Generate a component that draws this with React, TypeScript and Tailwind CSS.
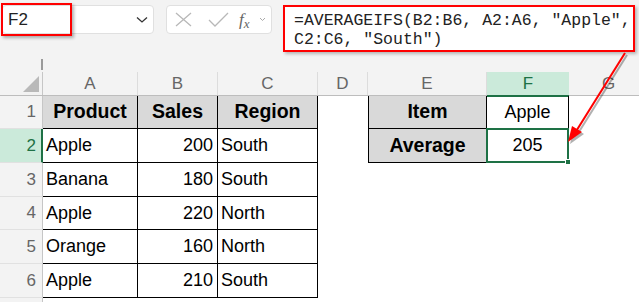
import React from "react";

const cols = [95, 80, 100, 50, 119, 82, 80];
const letters = ["A", "B", "C", "D", "E", "F", "G"];
const heights = [33, 34, 34, 33, 34, 34, 30];

type Cell = { t?: string; kind?: "hdr" | "l" | "r" | "c" | "sel"; box?: boolean; lb?: boolean };

const rows: Cell[][] = [
  [
    { t: "Product", kind: "hdr", box: true },
    { t: "Sales", kind: "hdr", box: true },
    { t: "Region", kind: "hdr", box: true },
    {},
    { t: "Item", kind: "hdr", box: true, lb: true },
    { t: "Apple", kind: "c", box: true },
    {},
  ],
  [
    { t: "Apple", kind: "l", box: true },
    { t: "200", kind: "r", box: true },
    { t: "South", kind: "l", box: true },
    {},
    { t: "Average", kind: "hdr", box: true, lb: true },
    { t: "205", kind: "sel", box: true },
    {},
  ],
  [
    { t: "Banana", kind: "l", box: true },
    { t: "180", kind: "r", box: true },
    { t: "South", kind: "l", box: true },
    {}, {}, {}, {},
  ],
  [
    { t: "Apple", kind: "l", box: true },
    { t: "220", kind: "r", box: true },
    { t: "North", kind: "l", box: true },
    {}, {}, {}, {},
  ],
  [
    { t: "Orange", kind: "l", box: true },
    { t: "160", kind: "r", box: true },
    { t: "North", kind: "l", box: true },
    {}, {}, {}, {},
  ],
  [
    { t: "Apple", kind: "l", box: true },
    { t: "210", kind: "r", box: true },
    { t: "South", kind: "l", box: true },
    {}, {}, {}, {},
  ],
  [{}, {}, {}, {}, {}, {}, {}],
];

function DataCell({ c, w }: { c: Cell; w: number }) {
  let cls = "h-full shrink-0 flex items-center text-[18px] text-black ";
  if (c.box) cls += "border-r border-b border-black ";
  if (c.lb) cls += "border-l ";
  if (c.kind === "hdr") cls += "bg-[#d9d9d9] justify-center font-bold text-[19.5px] ";
  if (c.kind === "l") cls += "justify-start pl-[3px] ";
  if (c.kind === "r") cls += "justify-end pr-[4px] ";
  if (c.kind === "c") cls += "justify-center ";
  if (c.kind === "sel") cls += "justify-center relative ";
  return (
    <div className={cls} style={{ width: w }}>
      {c.kind === "sel" ? (
        <div className="absolute inset-[-1px] border-2 border-[#1e7145] flex items-center justify-center">
          <span>{c.t}</span>
          <div className="absolute right-[-4px] bottom-[-4px] w-[6px] h-[6px] bg-[#1e7145] border border-white" />
        </div>
      ) : (
        <span>{c.t}</span>
      )}
    </div>
  );
}

export default function App() {
  return (
    <div
      className="relative w-[639px] h-[302px] overflow-hidden bg-white"
      style={{ fontFamily: '"Liberation Sans", Arial, sans-serif' }}
    >
      {/* Toolbar */}
      <div className="h-[72px] bg-[#f3f3f3] flex flex-col">
        <div className="flex items-start pt-[5px]">
          <div className="relative ml-[2px] w-[152px] h-[29px] bg-white border border-[#e0e0e0] rounded-[4px] flex items-center justify-between pl-[5px] pr-[5px]">
            <span className="text-[17px] text-[#222]">F2</span>
            <svg width="12" height="8" viewBox="0 0 12 8">
              <path d="M1 1.5 L6 6 L11 1.5" fill="none" stroke="#333" strokeWidth="1.3" />
            </svg>
            <div className="absolute left-[-2px] top-[-3px] w-[71px] h-[33px] border-2 border-[#ff0000] shadow-[2px_2px_3px_rgba(0,0,0,0.3)]" />
          </div>
          <div className="ml-[12px] w-[106px] h-[29px] bg-white border border-[#e0e0e0] rounded-[4px] flex items-center pl-[8px]">
            <svg width="18" height="15" viewBox="0 0 18 15">
              <path d="M1 1 L16 14 M16 1 L1 14" stroke="#b8b8b8" strokeWidth="1.3" fill="none" />
            </svg>
            <svg className="ml-[15px]" width="21" height="15" viewBox="0 0 21 15">
              <path d="M1 8 L7 14 L20 1" stroke="#b8b8b8" strokeWidth="1.3" fill="none" />
            </svg>
            <span
              className="ml-[10px] italic text-[17px] text-[#666] leading-none"
              style={{ fontFamily: '"Liberation Serif", serif' }}
            >
              f<span className="text-[13px] relative top-[3px]">x</span>
            </span>
            <svg className="ml-[9px]" width="7" height="5" viewBox="0 0 7 5">
              <path d="M1 1 L3.5 3.5 L6 1" fill="none" stroke="#aaa" strokeWidth="1" />
            </svg>
          </div>
          <div
            className="ml-[11px] w-[352px] h-[47px] bg-white border-2 border-[#ff0000] shadow-[2px_2px_3px_rgba(0,0,0,0.25)] pl-[9px] pt-[4px] text-[16.5px] leading-[19px] text-[#222] whitespace-pre"
            style={{ fontFamily: '"Liberation Mono", "DejaVu Sans Mono", monospace' }}
          >
            <div>=AVERAGEIFS(B2:B6, A2:A6, "Apple",</div>
            <div>C2:C6, "South")</div>
          </div>
        </div>
        <div className="ml-[41px] mt-[7px] w-[2px] h-[11px] bg-[#9a9a9a]" />
      </div>

      {/* Column headers */}
      <div className="flex h-[24px] bg-[#f3f3f3] border-b border-[#bdbdbd]">
        <div className="w-[43px] shrink-0 h-full border-r border-[#c6c6c6] relative">
          <svg className="absolute right-[3px] bottom-[3px]" width="16" height="16" viewBox="0 0 16 16">
            <path d="M16 0 L16 16 L0 16 Z" fill="#b9b9b9" />
          </svg>
        </div>
        {letters.map((l, i) =>
          l === "F" ? (
            <div
              key={l}
              className="shrink-0 h-[25px] bg-[#cbeada] border-b-2 border-[#1e7145] flex items-center justify-center text-[17px] text-[#1e7145]"
              style={{ width: cols[i] }}
            >
              {l}
            </div>
          ) : (
            <div
              key={l}
              className="shrink-0 h-full border-r border-[#dcdcdc] flex items-center justify-center text-[17px] text-[#666]"
              style={{ width: cols[i] }}
            >
              {l}
            </div>
          )
        )}
      </div>

      {/* Rows */}
      {rows.map((r, ri) => (
        <div key={ri} className="flex" style={{ height: heights[ri] }}>
          <div
            className={
              ri === 1
                ? "w-[43px] shrink-0 h-full bg-[#cbeada] border-r-2 border-[#1e7145] border-b border-b-[#e1e1e1] flex items-center justify-end pr-[5px] text-[17px] text-[#1e7145]"
                : "w-[43px] shrink-0 h-full bg-[#f3f3f3] border-r border-[#c6c6c6] border-b border-b-[#e1e1e1] flex items-center justify-end pr-[6px] text-[17px] text-[#666]"
            }
          >
            {ri < 6 ? ri + 1 : ""}
          </div>
          {r.map((c, ci) => (
            <DataCell key={ci} c={c} w={cols[ci]} />
          ))}
        </div>
      ))}

      {/* Red arrow annotation */}
      <svg className="absolute left-0 top-0 pointer-events-none" width="639" height="302" viewBox="0 0 639 302">
        <g opacity="0.3" transform="translate(2,2)">
          <line x1="625" y1="53" x2="575" y2="133" stroke="#000" strokeWidth="2" />
          <polygon points="568,142 572,126 582,132" fill="#000" />
        </g>
        <line x1="625" y1="53" x2="575" y2="133" stroke="#ff0000" strokeWidth="2" />
        <polygon points="568,142 572,126 582,132" fill="#ff0000" />
      </svg>
    </div>
  );
}
